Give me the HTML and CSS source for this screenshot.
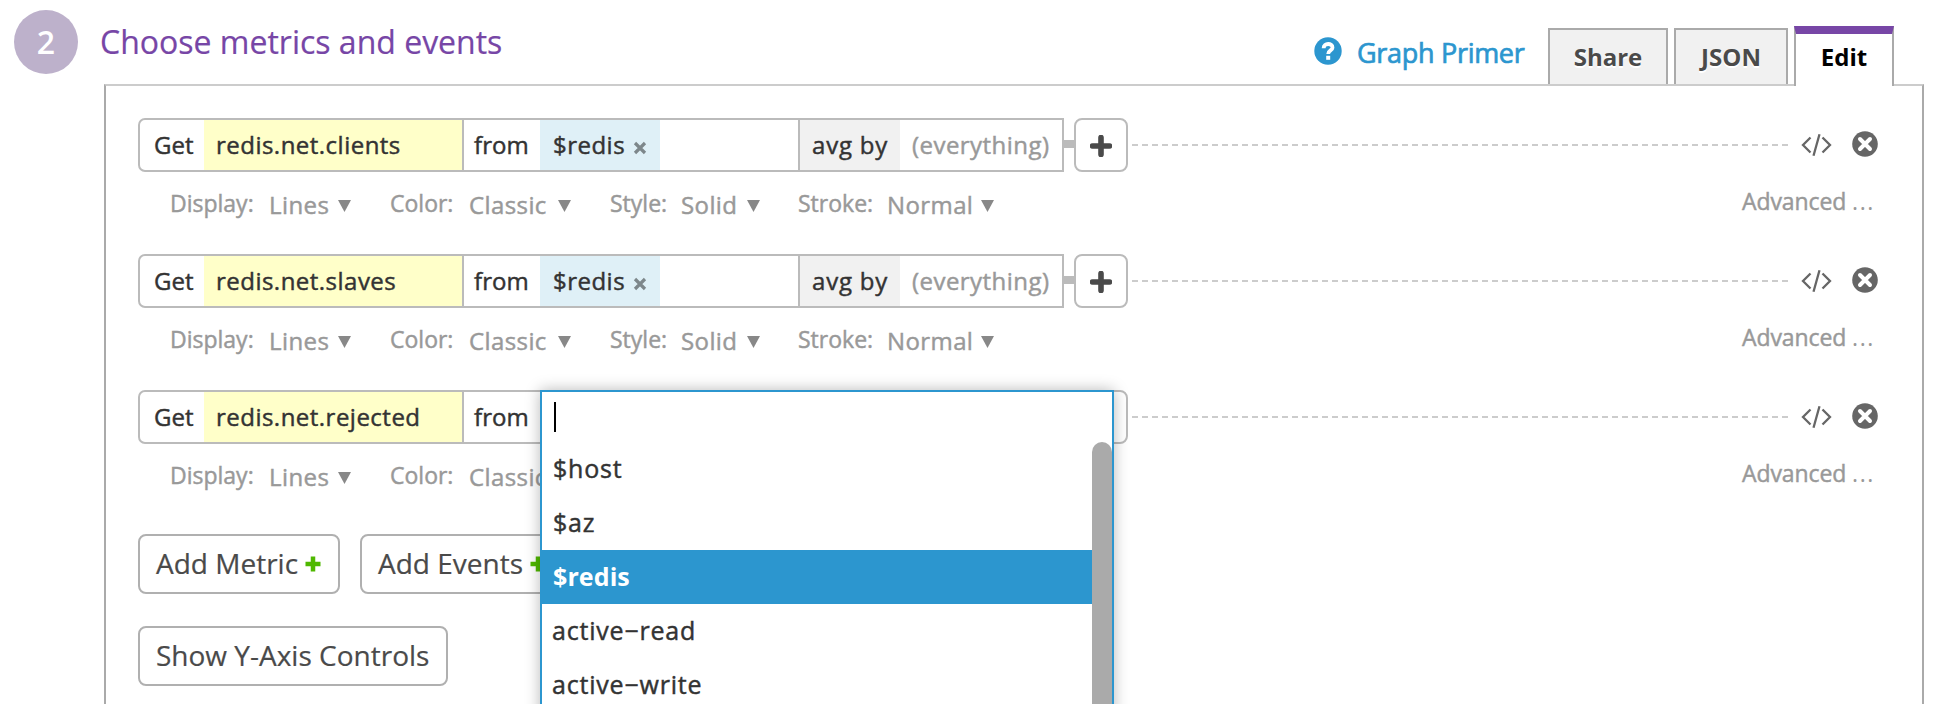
FILE: index.html
```html
<!DOCTYPE html>
<html lang="en">
<head>
<meta charset="utf-8">
<title>Choose metrics and events</title>
<link rel="stylesheet" href="styles.css">
</head>
<body>
<svg class="defs" width="0" height="0">
  <symbol id="code" viewBox="0 0 31 24"><path d="M9.500 4.500 2 12l7.500 7.500M21.500 4.500 29 12l-7.500 7.500M18.500 1.200 12.500 22.800" fill="none" stroke="#666" stroke-width="2.300"/></symbol>
  <symbol id="close" viewBox="0 0 26 26"><circle cx="13" cy="13" r="12.800" fill="#666"/><path d="M8 8l10 10M18 8L8 18" stroke="#fff" stroke-width="4" stroke-linecap="round"/></symbol>
  <symbol id="plus" viewBox="0 0 22 22"><path d="M11 2.500v17M2.500 11h17" stroke="#4a4a4a" stroke-width="5.600" stroke-linecap="round"/></symbol>
  <symbol id="x" viewBox="0 0 14 14"><path d="M2 2l10 10M12 2L2 12" stroke="#7d878b" stroke-width="3.200"/></symbol>
  <symbol id="green" viewBox="0 0 16 16"><path d="M8 .5v15M.5 8h15" stroke="#4fb800" stroke-width="4.500"/></symbol>
</svg>
<header class="head">
  <span class="step">2</span>
  <h1 class="title">Choose metrics and events</h1>
  <a class="primer"><svg class="help" viewBox="0 0 28 28"><circle cx="14" cy="14" r="13.700" fill="#2c96cf"/><path d="M9.600 11.200C9.700 5.600 18.600 5.800 18.500 10.600C18.400 13.600 14.200 13.300 14.200 17" fill="none" stroke="#fff" stroke-width="3.800"/><rect x="12.200" y="18.800" width="4" height="4" fill="#fff"/></svg><span class="primer-text">Graph Primer</span></a>
  <nav class="tabs"><a class="tab share">Share</a><a class="tab json">JSON</a><a class="tab edit">Edit</a></nav>
</header>
<main class="panel">
  <section class="row">
    <div class="query">
      <div class="box"><span class="get">Get</span><span class="metric">redis.net.clients</span><span class="from">from</span><span class="chip">$redis<svg class="x"><use href="#x"/></svg></span><span class="space"></span><span class="avg">avg by</span><span class="every">(everything)</span></div>
      <i class="link"></i><button class="add"><svg class="plus"><use href="#plus"/></svg></button><i class="dash"></i><svg class="code"><use href="#code"/></svg><svg class="close"><use href="#close"/></svg>
    </div>
    <div class="opts"><span class="label display">Display:</span><span class="val lines">Lines</span><i class="tri"></i><span class="label color">Color:</span><span class="val classic">Classic</span><i class="tri"></i><span class="label style">Style:</span><span class="val solid">Solid</span><i class="tri"></i><span class="label stroke">Stroke:</span><span class="val normal">Normal</span><i class="tri"></i><span class="advanced">Advanced <span class="dots">...</span></span></div>
  </section>
  <section class="row">
    <div class="query">
      <div class="box"><span class="get">Get</span><span class="metric">redis.net.slaves</span><span class="from">from</span><span class="chip">$redis<svg class="x"><use href="#x"/></svg></span><span class="space"></span><span class="avg">avg by</span><span class="every">(everything)</span></div>
      <i class="link"></i><button class="add"><svg class="plus"><use href="#plus"/></svg></button><i class="dash"></i><svg class="code"><use href="#code"/></svg><svg class="close"><use href="#close"/></svg>
    </div>
    <div class="opts"><span class="label display">Display:</span><span class="val lines">Lines</span><i class="tri"></i><span class="label color">Color:</span><span class="val classic">Classic</span><i class="tri"></i><span class="label style">Style:</span><span class="val solid">Solid</span><i class="tri"></i><span class="label stroke">Stroke:</span><span class="val normal">Normal</span><i class="tri"></i><span class="advanced">Advanced <span class="dots">...</span></span></div>
  </section>
  <section class="row">
    <div class="query">
      <div class="box"><span class="get">Get</span><span class="metric">redis.net.rejected</span><span class="from">from</span></div>
      <i class="link"></i><button class="add"></button><i class="dash"></i><svg class="code"><use href="#code"/></svg><svg class="close"><use href="#close"/></svg>
      <div class="dropdown">
        <div class="field"><i class="caret"></i></div>
        <div class="list">
          <ul class="items"><li class="item">$host</li><li class="item">$az</li><li class="item selected">$redis</li><li class="item word">active−read</li><li class="item word">active−write</li></ul>
          <i class="thumb"></i>
        </div>
      </div>
    </div>
    <div class="opts"><span class="label display">Display:</span><span class="val lines">Lines</span><i class="tri"></i><span class="label color">Color:</span><span class="val classic">Classic</span><span class="advanced">Advanced <span class="dots">...</span></span></div>
  </section>
  <div class="buttons">
    <button class="btn metric-btn">Add Metric<svg class="green"><use href="#green"/></svg></button>
    <button class="btn events-btn">Add Events<svg class="green"><use href="#green"/></svg></button>
  </div>
  <button class="btn axis-btn">Show Y-Axis Controls</button>
</main>
</body>
</html>
```
FILE: styles.css
```css
* { box-sizing: border-box; }
html, body { margin: 0; height: 704px; overflow: hidden; background: #fff; }
body { font: 24px/50px "Open Sans", "Noto Sans", sans-serif; color: #333; white-space: nowrap; }
svg { display: block; flex: none; }
i, span, button { flex: none; }
.defs { position: absolute; }
button { font: inherit; padding: 0; background: #fff; }

.head { display: flex; height: 84px; }
.step { width: 64px; height: 64px; margin: 10px 0 0 14px; border-radius: 50%; background: #bdb1cb; color: #fff; font-size: 32px; font-weight: 600; line-height: 64px; text-align: center; }
.title { flex: none; width: 1213px; margin: 17px 0 0 22px; font-size: 32px; line-height: 50px; font-weight: 400; color: #7746a6; -webkit-text-stroke: .2px; }
.primer { display: flex; flex: none; width: 235px; color: #2c96cf; font-size: 27px; letter-spacing: -.3px; -webkit-text-stroke: .7px; }
.help { width: 28px; height: 28px; margin: 37px 0 0 1px; }
.primer-text { margin: 28px 0 0 15px; }
.tabs { display: flex; flex: none; gap: 6px; height: 86px; }
.tab { height: 56px; margin-top: 28px; border: 2px solid #aaa; border-bottom: 0; background: #f1f1f1; color: #4a4a4a; font-weight: 700; line-height: 54px; text-align: center; text-shadow: 0 2px 0 #fff; }
.share { width: 120px; }
.json { width: 114px; }
.edit { width: 100px; height: 60px; margin-top: 26px; border-top: 8px solid #7746a6; background: #fff; color: #000; line-height: 46px; }

.panel { width: 1820px; height: 640px; margin-left: 104px; padding: 32px 0 0 32px; border: 2px solid #aaa; border-top-color: #ccc; }
.row { height: 136px; -webkit-text-stroke: .45px; }
.query { display: flex; position: relative; height: 54px; letter-spacing: .48px; }
.box { display: flex; width: 926px; height: 54px; border: 2px solid #bbb; border-radius: 7px 0 0 7px; }
.get { width: 64px; padding-left: 14px; letter-spacing: 0; }
.metric { width: 260px; padding-left: 12px; border-right: 2px solid #bbb; background: #ffffc9; }
.from { width: 76px; padding-left: 10px; letter-spacing: .1px; }
.chip { display: flex; width: 120px; padding-left: 13px; background: #dff0f7; }
.x { width: 14px; height: 14px; margin: 21px 0 0 8px; }
.space { width: 140px; border-right: 2px solid #bbb; }
.avg { width: 100px; padding-left: 12px; background: #f1f1f1; letter-spacing: .8px; }
.every { padding-left: 12px; color: #999; letter-spacing: .45px; }
.link { width: 10px; height: 8px; margin-top: 22px; background: #bbb; }
.add { width: 54px; height: 54px; border: 2px solid #bbb; border-radius: 8px; }
.plus { width: 22px; height: 22px; margin: 2px auto 0; }
.dash { width: 656px; height: 2px; margin: 26px 0 0 4px; background: repeating-linear-gradient(90deg, #ccc 0 6px, transparent 6px 10px); }
.code { width: 31px; height: 24px; margin: 15px 0 0 13px; }
.close { width: 26px; height: 26px; margin: 13px 0 0 20px; }

.opts { display: flex; height: 50px; padding: 8px 0 0 32px; color: #999; }
.label { font-size: 23px; line-height: 46px; }
.val { line-height: 49px; letter-spacing: .4px; }
.display { width: 99px; }
.lines { width: 69px; }
.color { width: 79px; margin-left: 40px; }
.classic { width: 89px; }
.style { width: 71px; margin-left: 40px; }
.solid { width: 66px; }
.stroke { width: 89px; margin-left: 39px; }
.normal { width: 94px; }
.tri { width: 13px; height: 12px; margin: 20px -1px 0 0; background: #888; clip-path: polygon(0 0, 100% 0, 50% 100%); }
.advanced { width: 132px; margin: 0 48px 0 auto; font-size: 23px; line-height: 43px; letter-spacing: -.1px; }
.dots { letter-spacing: 1.6px; -webkit-text-stroke: 0; }

.buttons { display: flex; gap: 20px; margin: 8px 0 32px; }
.btn { display: flex; height: 60px; border: 2px solid #b0b0b0; border-radius: 8px; padding-left: 16px; color: #4a4a4a; font-size: 28px; line-height: 55px; -webkit-text-stroke: .2px; }
.metric-btn { width: 202px; }
.events-btn { width: 206px; }
.axis-btn { width: 310px; }
.green { width: 16px; height: 16px; margin: 20px 0 0 7px; }

.dropdown { position: absolute; left: 402px; top: 0; width: 574px; height: 340px; border: 2px solid #2c96cf; background: #fff; box-shadow: 0 0 14px rgba(0, 0, 0, .28); }
.field { height: 50px; padding: 10px 0 0 12px; }
.caret { display: block; width: 2px; height: 30px; background: #000; }
.list { display: flex; }
.items { flex: 1; margin: 0; padding: 0; list-style: none; }
.item { height: 54px; padding-left: 11px; line-height: 53px; font-size: 25px; letter-spacing: .8px; }
.word { padding-left: 10px; }
.selected { background: #2c96cf; color: #fff; font-weight: 700; letter-spacing: .1px; -webkit-text-stroke: 0; }
.thumb { width: 20px; height: 290px; border-radius: 10px 10px 0 0; background: #aaa; }
```
